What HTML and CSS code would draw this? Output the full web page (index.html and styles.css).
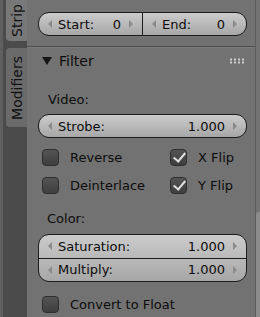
FILE: index.html
```html
<!DOCTYPE html>
<html lang="en">
<head>
  <meta charset="UTF-8" />
  <title>Strip Filter</title>
  <link rel="stylesheet" href="styles.css">
</head>
<body>
  <div class="app">
    <nav class="tabs">
      <div class="tab active"><span>Strip</span></div>
      <div class="tab"><span>Modifiers</span></div>
    </nav>

    <main class="props">
      <div class="field pair">
        <div class="num">
          <i class="arr left"></i><span class="name">Start:</span><span class="val">0</span><i class="arr right"></i>
        </div>
        <div class="num">
          <i class="arr left"></i><span class="name">End:</span><span class="val">0</span><i class="arr right"></i>
        </div>
      </div>

      <div class="panel-head">
        <span class="tri"></span>
        <span class="title">Filter</span>
        <span class="grip"></span>
      </div>

      <div class="label">Video:</div>
      <div class="field">
        <div class="num">
          <i class="arr left"></i><span class="name">Strobe:</span><span class="val">1.000</span><i class="arr right"></i>
        </div>
      </div>

      <div class="checks">
        <label class="check"><span class="box"></span>Reverse</label>
        <label class="check"><span class="box on"></span>X Flip</label>
        <label class="check"><span class="box"></span>Deinterlace</label>
        <label class="check"><span class="box on"></span>Y Flip</label>
      </div>

      <div class="label color">Color:</div>
      <div class="field stack">
        <div class="num">
          <i class="arr left"></i><span class="name">Saturation:</span><span class="val">1.000</span><i class="arr right"></i>
        </div>
        <div class="num">
          <i class="arr left"></i><span class="name">Multiply:</span><span class="val">1.000</span><i class="arr right"></i>
        </div>
      </div>

      <label class="check last"><span class="box"></span>Convert to Float</label>
    </main>

    <div class="scroll"><div class="thumb"></div></div>
  </div>
</body>
</html>
```

FILE: styles.css
```css
* { margin: 0; padding: 0; box-sizing: border-box; }
body, html {
  width: 260px;
  height: 317px;
  overflow: hidden;
  background: #727272;
  font-family: 'DejaVu Sans', 'Liberation Sans', sans-serif;
  font-size: 13px;
  color: #0c0c0c;
}
.app {
  display: flex;
  height: 317px;
}

/* left tab column */
.tabs {
  width: 27px;
  flex-shrink: 0;
  background: #4b4b4b;
  border-left: 3px solid #5f5f5f;
  padding-left: 3px;
  display: flex;
  flex-direction: column;
  gap: 7px;
}
.tab {
  background: #6a6a6a;
  border-radius: 4px 0 0 4px;
  display: flex;
  align-items: center;
  justify-content: center;
  height: 79px;
  font-size: 14px;
  color: #111;
}
.tab.active {
  background: #787878;
  height: 41px;
  border-radius: 0 0 0 4px;
}
.tab span {
  writing-mode: vertical-rl;
  transform: rotate(180deg);
}

/* main properties area */
.props {
  flex: 1;
  padding: 12px 8px 0 11px;
  border-right: 1px solid #5c5c5c;
}
.field {
  display: flex;
  height: 24px;
  border: 1px solid #1c1c1c;
  border-radius: 11px;
  overflow: hidden;
  background: linear-gradient(#cbcbcb, #a7a7a7);
}
.field .num {
  flex: 1;
  display: flex;
  align-items: center;
  padding: 0 9px;
}
.field.pair .num + .num { border-left: 1px solid #1c1c1c; }
.field.stack {
  flex-direction: column;
  height: 48px;
}
.field.stack .num + .num { border-top: 1px solid #1c1c1c; }
.name { margin-left: 6px; }
.val { margin-left: auto; margin-right: 8px; }
.arr {
  width: 0;
  height: 0;
  border-top: 4px solid transparent;
  border-bottom: 4px solid transparent;
}
.arr.left { border-right: 4px solid #8a8a8a; }
.arr.right { border-left: 4px solid #8a8a8a; }

.panel-head {
  display: flex;
  align-items: center;
  height: 27px;
  margin: 10px -8px 0 -11px;
  padding: 1px 10px 0 15px;
  border-top: 1px solid #4e4e4e;
  box-shadow: inset 0 1px 0 #7c7c7c;
  font-size: 14px;
}
.tri {
  width: 0;
  height: 0;
  border-left: 5px solid transparent;
  border-right: 5px solid transparent;
  border-top: 8px solid #151515;
  margin-right: 7px;
}
.grip {
  margin-left: auto;
  width: 16px;
  height: 6px;
  background: radial-gradient(circle, #d0d0d0 0.9px, transparent 1.3px) 0 0 / 4px 3px;
}

.label {
  margin: 19px 0 7px 10px;
}
.label.color { margin: 17px 0 8px 9px; }

.checks {
  display: grid;
  grid-template-columns: 128px 1fr;
  row-gap: 11px;
  margin: 11px 0 0 4px;
}
.check {
  display: flex;
  align-items: center;
  gap: 11px;
}
.box {
  width: 17px;
  height: 17px;
  border: 1px solid #2e2e2e;
  border-radius: 4px;
  background: linear-gradient(#545454, #3e3e3e);
  position: relative;
}
.box.on::after {
  content: "";
  position: absolute;
  left: 5px;
  top: 0;
  width: 5px;
  height: 10px;
  border: solid #e0e0e0;
  border-width: 0 2px 2px 0;
  transform: rotate(40deg);
}
.check.last { margin: 14px 0 0 4px; }

/* right scrollbar */
.scroll {
  width: 4px;
  flex-shrink: 0;
  padding-top: 212px;
}
.thumb {
  height: 105px;
  background: #8c8c8c;
  border-radius: 3px 0 0 0;
}
```
